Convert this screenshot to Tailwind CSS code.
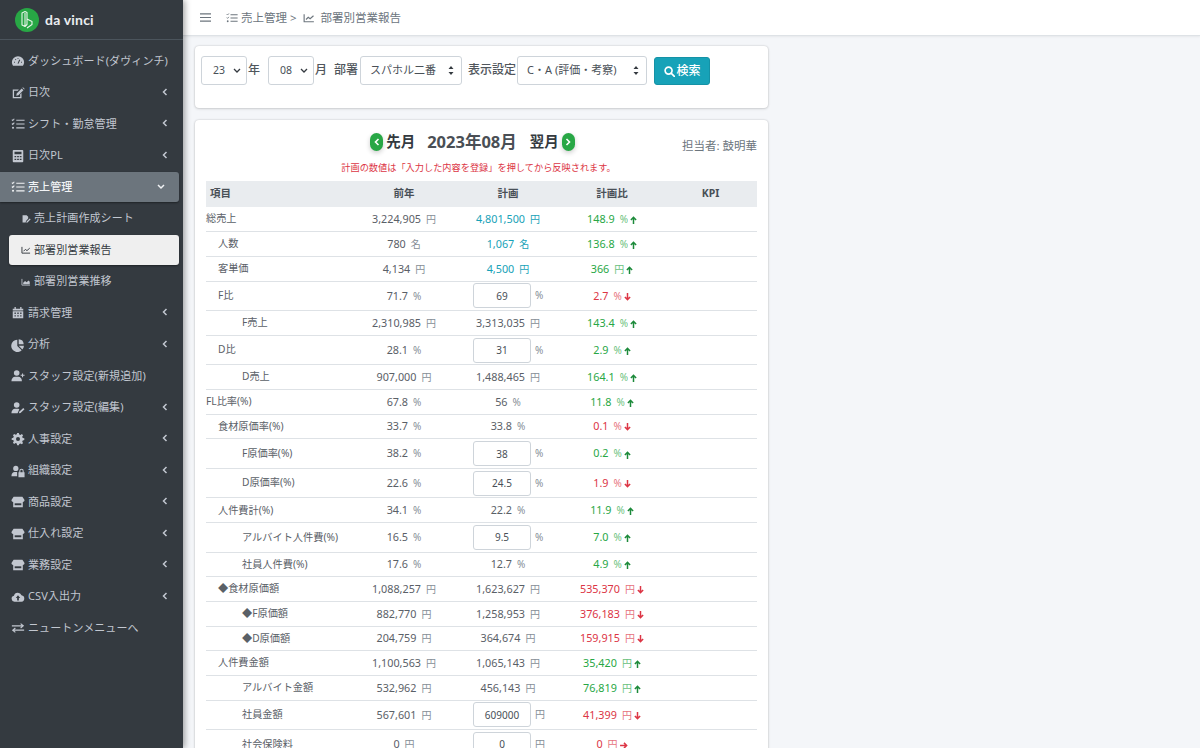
<!DOCTYPE html>
<html lang="ja">
<head>
<meta charset="UTF-8">
<title>部署別営業報告</title>
<script src="https://cdn.jsdelivr.net/npm/@tailwindcss/browser@4"></script>
</head>
<body class="h-[748px] overflow-hidden bg-[#f4f6f9] text-[#5a6067] font-['Noto_Sans','Noto_Sans_CJK_JP',sans-serif]">
<div class="flex h-[748px]">

  <!-- sidebar -->
  <aside class="w-[183px] shrink-0 bg-[#343a40] text-[#c2c7d0] shadow-[2px_0_6px_rgba(0,0,0,.35)] z-10">
    <div class="h-[40px] flex items-center pl-[15px] gap-[6px] border-b border-[#4b545c]">
      <svg class="w-[24px] h-[24px]" viewBox="0 0 24 24">
        <circle cx="12" cy="12" r="12" fill="#28a745"/>
        <path d="M7 5l3-1.500 2 1v12l-2 2-3-1.500zM10 5v13.500M12 11l5 2.500v3L12 20" fill="none" stroke="#e8f5ea" stroke-width="1.100" stroke-linejoin="round"/>
      </svg>
      <span class="text-[14px] font-bold text-[#e9ecef] font-['Lato',sans-serif] tracking-[.2px]">da vinci</span>
    </div>
    <nav id="nav" class="pt-[6px] text-[11px] tracking-[.1px]"></nav>
  </aside>

  <div class="flex-1 min-w-0 h-[748px] overflow-hidden">
    <!-- top bar -->
    <header class="h-[36px] bg-white border-b border-[#dee2e6] shadow-[0_1px_2px_rgba(0,0,0,.06)] flex items-center text-[11.500px] text-[#6c757d]">
      <svg class="w-[11px] h-[11px] ml-[17px]" viewBox="0 0 12 12" fill="none" stroke="#6c757d" stroke-width="1.300"><path d="M0 2h12M0 6h12M0 10h12"/></svg>
      <span id="crumb1" class="ml-[15px] w-[12px] h-[12px] flex"></span>
      <span class="ml-[3px]">売上管理 &gt;</span>
      <span id="crumb2" class="ml-[6px] w-[12px] h-[12px] flex"></span>
      <span class="ml-[6px]">部署別営業報告</span>
    </header>

    <main class="w-[573px] ml-[12px] pt-[10px]">
      <!-- search -->
      <section class="h-[62px] bg-white rounded-[4px] shadow-[0_0_2px_rgba(0,0,0,.2),0_1px_3px_rgba(0,0,0,.12)] pt-[10px] pl-[6px] flex items-start text-[12px] text-[#50565c]">
        <div class="relative w-[46px] h-[29px]">
          <select class="w-full h-full appearance-none pl-[11px] bg-white border border-[#ced4da] rounded-[3px] text-[10.500px] text-[#495057]"><option>23</option></select>
          <svg class="absolute right-[6px] top-[12px] w-[8px] h-[5px]" viewBox="0 0 8 5" fill="none" stroke="#343a40" stroke-width="1.300"><path d="M1 1l3 3 3-3"/></svg>
        </div>
        <span class="ml-[1px] mt-[5px] font-medium">年</span>
        <div class="relative w-[46px] h-[29px] ml-[8px]">
          <select class="w-full h-full appearance-none pl-[11px] bg-white border border-[#ced4da] rounded-[3px] text-[10.500px] text-[#495057]"><option>08</option></select>
          <svg class="absolute right-[6px] top-[12px] w-[8px] h-[5px]" viewBox="0 0 8 5" fill="none" stroke="#343a40" stroke-width="1.300"><path d="M1 1l3 3 3-3"/></svg>
        </div>
        <span class="ml-[1px] mt-[5px] font-medium">月</span>
        <span class="ml-[7px] mt-[5px] font-medium">部署</span>
        <div class="relative w-[102px] h-[29px] ml-[2px]">
          <select class="w-full h-full appearance-none pl-[9px] bg-white border border-[#ced4da] rounded-[3px] text-[11px] text-[#495057]"><option>スパホル二番</option></select>
          <svg class="absolute right-[8px] top-[10px] w-[6px] h-[9px]" viewBox="0 0 6 9" fill="#343a40"><path d="M3 0l2.500 3H.500zM3 9L.500 6h5z"/></svg>
        </div>
        <span class="ml-[6px] mt-[5px] font-medium">表示設定</span>
        <div class="relative w-[130px] h-[29px] ml-[1px]">
          <select class="w-full h-full appearance-none pl-[9px] bg-white border border-[#ced4da] rounded-[3px] text-[11px] text-[#495057]"><option>C・A (評価・考察)</option></select>
          <svg class="absolute right-[8px] top-[10px] w-[6px] h-[9px]" viewBox="0 0 6 9" fill="#343a40"><path d="M3 0l2.500 3H.500zM3 9L.500 6h5z"/></svg>
        </div>
        <button class="ml-[7px] mt-[1px] w-[56px] h-[28px] bg-[#17a2b8] border border-[#1592a6] rounded-[3px] text-white text-[12px] font-medium flex items-center justify-center gap-[2px]">
          <svg class="w-[11px] h-[11px]" viewBox="0 0 12 12" fill="none" stroke="#fff" stroke-width="1.800"><circle cx="5" cy="5" r="3.800"/><path d="M8 8l3.300 3.300" stroke-linecap="round"/></svg>検索
        </button>
      </section>

      <!-- report -->
      <section class="mt-[12px] bg-white rounded-[4px] shadow-[0_0_2px_rgba(0,0,0,.2),0_1px_3px_rgba(0,0,0,.12)] px-[11px] pt-[10px] h-[700px]">
        <div class="relative h-[24px] flex items-center justify-center pr-[18px] text-[#343a40]">
          <span class="w-[13px] h-[18px] rounded-full bg-[#28a745] text-white flex items-center justify-center shadow-[0_2px_5px_rgba(0,0,0,.2)]">
            <svg class="w-[6px] h-[8px]" viewBox="0 0 6 8" fill="none" stroke="#fff" stroke-width="1.600"><path d="M4.500 1L1.500 4l3 3"/></svg>
          </span>
          <span class="ml-[3px] text-[14.500px] font-bold">先月</span>
          <span class="ml-[12px] text-[16.500px] font-bold text-[#4a4f55]">2023年08月</span>
          <span class="ml-[13px] text-[14.500px] font-bold">翌月</span>
          <span class="ml-[3px] w-[13px] h-[18px] rounded-full bg-[#28a745] text-white flex items-center justify-center shadow-[0_2px_5px_rgba(0,0,0,.2)]">
            <svg class="w-[6px] h-[8px]" viewBox="0 0 6 8" fill="none" stroke="#fff" stroke-width="1.600"><path d="M1.500 1l3 3-3 3"/></svg>
          </span>
          <span class="absolute right-0 top-[7px] text-[11.500px] text-[#6c757d]">担当者: 鼓明華</span>
        </div>
        <p class="mt-[7px] pr-[6px] text-center text-[9.200px] leading-[14px] text-[#dc3545]">計画の数値は「入力した内容を登録」を押してから反映されます。</p>
        <table class="mt-[6px] w-[551px] table-fixed border-collapse">
          <colgroup><col class="w-[146px]"><col class="w-[104px]"><col class="w-[104px]"><col class="w-[104px]"><col class="w-[93px]"></colgroup>
          <thead>
            <tr class="h-[26px] bg-[#e9ecef] text-[10.500px] font-bold text-[#495057]">
              <th class="text-left pl-[4px] font-bold">項目</th><th class="font-bold">前年</th><th class="font-bold">計画</th><th class="font-bold">計画比</th><th class="font-bold">KPI</th>
            </tr>
          </thead>
          <tbody id="rows"></tbody>
        </table>
      </section>
    </main>
  </div>
</div>

<script>
  const dark = '#343a40'
  const icons = {
    gauge: `<path d="M8 2.500a7 7 0 0 0-7 7c0 1.500.5 2.800 1.300 4h11.400c.8-1.200 1.300-2.500 1.300-4a7 7 0 0 0-7-7z"/><path d="M8 11l2-4.500M3.500 9.500h1M11.500 9.500h1M5 6l.7.7M8 4.500v1" stroke="${dark}" stroke-width="1.200" fill="none"/>`,
    edit: `<path d="M2 4h7L7.800 5.500H3.500v7h7V9.300L12 8v6H2z"/><path d="M6.500 8.500l5.700-5.700 2 2-5.700 5.700-2.500.5zM13 2l.7-.7 2 2-.7.7z"/>`,
    tasks: `<path d="M6 3h9.500v1.400H6zM6 7.300h9.500v1.400H6zM6 11.600h9.500V13H6z"/><path d="M1 3l1 1 1.800-2M1 7.500l1 1 1.800-2" fill="none" stroke="currentColor" stroke-width="1.200"/><circle cx="2.300" cy="12.300" r="1.200"/>`,
    calc: `<path fill-rule="evenodd" d="M3 1h10a1 1 0 0 1 1 1v12a1 1 0 0 1-1 1H3a1 1 0 0 1-1-1V2a1 1 0 0 1 1-1zm1 2v3h8V3zm0 5v1.500h2V8zm3 0v1.500h2V8zm3 0v1.500h2V8zm-6 3v1.500h2V11zm3 0v1.500h2V11zm3 0v1.500h2V11z"/>`,
    line: `<path d="M1.500 3v10h13M4 10l3-3 2.500 2L14 5" fill="none" stroke="currentColor" stroke-width="1.500"/>`,
    sign: `<path d="M2.500 2h6.500l2.500 2.500V7L8 11l-.5 2.500h-5z"/><path d="M9 12l5-5 1.500 1.500-5 5-2 .5z"/>`,
    area: `<path d="M1.500 3v10h13" fill="none" stroke="currentColor" stroke-width="1.300"/><path d="M3.500 11.500V9l3-2.500 2.500 2 3-3 2 2v4z"/>`,
    cal: `<path fill-rule="evenodd" d="M4 1h1.500v2h5V1H12v2h2v2H2V3h2zM2 6h12v8H2zm2 1.500V9h1.500V7.500zm3.200 0V9h1.600V7.500zm3.300 0V9H12V7.500zM4 10.500V12h1.500v-1.500zm3.200 0V12h1.600v-1.500zm3.300 0V12H12v-1.500z"/>`,
    pie: `<path d="M7.200 2v7l5 5A7 7 0 1 1 7.200 2z"/><path d="M8.800 1.500a6 6 0 0 1 5.700 5.700H8.800zM8.800 8.800h6a6 6 0 0 1-1.800 4.200z"/>`,
    userPlus: `<circle cx="6.500" cy="4.500" r="3.200"/><path d="M.5 14c0-3.500 2-5.200 4-5.200h4c2 0 4 1.700 4 5.200z"/><path d="M13.200 5v4.500M11 7.200h4.500" stroke="currentColor" stroke-width="1.200"/>`,
    userEdit: `<circle cx="6.500" cy="4.500" r="3.200"/><path d="M.5 14c0-3.500 2-5.200 4-5.200h4l1 .6L7.500 14z"/><path d="M9 14l.4-1.800 4.600-4.200 1.400 1.400-4.500 4.300z"/>`,
    cog: `<path d="M7 1h2l.4 1.800 1.400.6 1.600-1 1.400 1.400-1 1.600.6 1.400 1.800.4v2l-1.800.4-.6 1.400 1 1.600-1.400 1.400-1.600-1-1.400.6L9 15H7l-.4-1.800-1.400-.6-1.600 1-1.400-1.400 1-1.600-.6-1.400L.8 9V7l1.800-.4.6-1.400-1-1.600 1.400-1.400 1.600 1 1.400-.6z"/><circle cx="8" cy="8" r="2.300" fill="${dark}"/>`,
    userLock: `<circle cx="5.500" cy="5" r="3"/><path d="M.5 14c0-3.300 1.800-4.800 3.500-4.800h3V14z"/><path fill-rule="evenodd" d="M8.500 9.500h1V8a2.500 2.500 0 0 1 5 0v1.500h1V15h-7zm2.200 0h2.600V8a1.300 1.300 0 0 0-2.600 0z"/>`,
    store: `<path d="M3 2h10l2.500 3.800c0 1.400-1 2.200-2 2.200v6h-11V8c-1 0-2-.8-2-2.200z"/><path d="M4.200 9.500h7.600v2.200H4.200z" fill="${dark}"/>`,
    cloud: `<path d="M4 13.500a3.500 3.500 0 0 1-.6-6.900 4.500 4.500 0 0 1 8.600-.6 3.800 3.800 0 0 1 0 7.500z"/><path d="M8 6L5.500 9H7v3h2V9h1.500z" fill="${dark}"/>`,
    swap: `<path d="M1 5.500h13M11 3l3 2.500L11 8M15 10.500H2M5 8l-3 2.500L5 13" fill="none" stroke="currentColor" stroke-width="1.300"/>`
  }
  const svg = (name, cls) => `<svg class="${cls}" viewBox="0 0 16 16" fill="currentColor">${icons[name]}</svg>`

  const menu = [
    ['gauge', 'ダッシュボード(ダヴィンチ)'], ['edit', '日次', 1], ['tasks', 'シフト・勤怠管理', 1], ['calc', '日次PL', 1],
    ['tasks', '売上管理', 2], ['sign', '売上計画作成シート', 0, 'sub'], ['line', '部署別営業報告', 0, 'on'], ['area', '部署別営業推移', 0, 'sub'],
    ['cal', '請求管理', 1], ['pie', '分析', 1], ['userPlus', 'スタッフ設定(新規追加)'], ['userEdit', 'スタッフ設定(編集)', 1],
    ['cog', '人事設定', 1], ['userLock', '組織設定', 1], ['store', '商品設定', 1], ['store', '仕入れ設定', 1], ['store', '業務設定', 1],
    ['cloud', 'CSV入出力', 1], ['swap', 'ニュートンメニューへ']
  ]
  document.getElementById('nav').innerHTML = menu.map(([icon, label, arrow, kind]) => {
    const chev = arrow === 1
      ? '<svg class="absolute right-[15px] top-[10px] w-[6px] h-[8px]" viewBox="0 0 6 8" fill="none" stroke="currentColor" stroke-width="1.500"><path d="M4.500 1L1.500 4l3 3"/></svg>'
      : arrow === 2
      ? '<svg class="absolute right-[14px] top-[12px] w-[8px] h-[6px]" viewBox="0 0 8 6" fill="none" stroke="currentColor" stroke-width="1.500"><path d="M1 1l3 3 3-3"/></svg>'
      : ''
    if (kind === 'on') return `<a class="relative ml-[9px] mr-[4px] h-[30px] mb-[1.500px] flex items-center pl-[12px] gap-[3px] rounded-[3px] bg-[#efefef] text-[#343a40] shadow-[0_1px_2px_rgba(0,0,0,.4)]">${svg(icon, 'w-[10px] h-[10px] shrink-0')}${label}</a>`
    if (kind === 'sub') return `<a class="relative h-[30px] mb-[1.500px] flex items-center pl-[21px] gap-[3px]">${svg(icon, 'w-[10px] h-[10px] shrink-0')}${label}</a>`
    if (arrow === 2) return `<a class="relative mr-[4px] h-[30px] mb-[1.500px] flex items-center pl-[11px] gap-[3px] rounded-r-[3px] bg-[#6c757d] text-[#f1f3f5] font-medium shadow-[0_1px_2px_rgba(0,0,0,.4)]">${svg(icon, 'w-[14px] h-[14px] shrink-0')}${label}${chev}</a>`
    return `<a class="relative h-[30px] mb-[1.500px] flex items-center pl-[11px] gap-[3px]">${svg(icon, 'w-[14px] h-[14px] shrink-0')}${label}${chev}</a>`
  }).join('')

  document.getElementById('crumb1').innerHTML = svg('tasks', 'w-[12px] h-[12px]')
  document.getElementById('crumb2').innerHTML = svg('line', 'w-[12px] h-[12px]')

  // label, indent, last year, unit, plan, plan type (b = blue, i = input), ratio, direction
  const data = [
    ['総売上', 0, '3,224,905', '円', '4,801,500', 'b', '148.9', '%', 'u'],
    ['人数', 1, '780', '名', '1,067', 'b', '136.8', '%', 'u', '名'],
    ['客単価', 1, '4,134', '円', '4,500', 'b', '366', '円', 'u'],
    ['F比', 1, '71.7', '%', '69', 'i', '2.7', '%', 'd'],
    ['F売上', 2, '2,310,985', '円', '3,313,035', '', '143.4', '%', 'u'],
    ['D比', 1, '28.1', '%', '31', 'i', '2.9', '%', 'u'],
    ['D売上', 2, '907,000', '円', '1,488,465', '', '164.1', '%', 'u'],
    ['FL比率(%)', 0, '67.8', '%', '56', '', '11.8', '%', 'u'],
    ['食材原価率(%)', 1, '33.7', '%', '33.8', '', '0.1', '%', 'd'],
    ['F原価率(%)', 2, '38.2', '%', '38', 'i', '0.2', '%', 'u'],
    ['D原価率(%)', 2, '22.6', '%', '24.5', 'i', '1.9', '%', 'd'],
    ['人件費計(%)', 1, '34.1', '%', '22.2', '', '11.9', '%', 'u'],
    ['アルバイト人件費(%)', 2, '16.5', '%', '9.5', 'i', '7.0', '%', 'u'],
    ['社員人件費(%)', 2, '17.6', '%', '12.7', '', '4.9', '%', 'u'],
    ['◆食材原価額', 1, '1,088,257', '円', '1,623,627', '', '535,370', '円', 'd'],
    ['◆F原価額', 2, '882,770', '円', '1,258,953', '', '376,183', '円', 'd'],
    ['◆D原価額', 2, '204,759', '円', '364,674', '', '159,915', '円', 'd'],
    ['人件費金額', 1, '1,100,563', '円', '1,065,143', '', '35,420', '円', 'u'],
    ['アルバイト金額', 2, '532,962', '円', '456,143', '', '76,819', '円', 'u'],
    ['社員金額', 2, '567,601', '円', '609000', 'i', '41,399', '円', 'd'],
    ['社会保険料', 2, '0', '円', '0', 'i', '0', '円', 'r']
  ]
  const arrows = {
    u: '<svg class="inline w-[7px] h-[8px] ml-[2px] text-[#1c8a3a]" viewBox="0 0 8 9" fill="none" stroke="currentColor" stroke-width="1.700"><path d="M4 9V1.500M1 4.500l3-3 3 3"/></svg>',
    d: '<svg class="inline w-[7px] h-[8px] ml-[2px] text-[#dc3545]" viewBox="0 0 8 9" fill="none" stroke="currentColor" stroke-width="1.700"><path d="M4 0v7.500M1 4.500l3 3 3-3"/></svg>',
    r: '<svg class="inline w-[8px] h-[7px] ml-[2px] text-[#dc3545]" viewBox="0 0 9 8" fill="none" stroke="currentColor" stroke-width="1.700"><path d="M0 4h7.500M4.500 1l3 3-3 3"/></svg>'
  }
  const indent = ['pl-0', 'pl-[12px]', 'pl-[36px]']
  document.getElementById('rows').innerHTML = data.map(r => {
    const [label, lv, prev, unit, plan, type, ratio, rUnit, dir, pUnit] = r
    const planUnit = pUnit || unit
    const planCell = type === 'i'
      ? `<div class="flex items-center pl-[17px]"><input value="${plan}" class="w-[58px] h-[25px] border border-[#ced4da] rounded-[3px] text-center text-[10px] text-[#495057]"><span class="ml-[4px] text-[10px] text-[#868e96]">${planUnit}</span></div>`
      : `<span class="${type === 'b' ? 'text-[#17a2b8]' : ''}">${plan}</span><span class="ml-[5px] text-[10px] ${type === 'b' ? 'text-[#17a2b8]' : 'text-[#868e96]'}">${planUnit}</span>`
    const good = dir === 'u'
    return `<tr class="${type === 'i' ? 'h-[29.500px]' : 'h-[24.700px]'} border-b border-[#dee2e6] text-[10.800px] text-center">
      <td class="text-left text-[10.200px] ${indent[lv]}">${label}</td>
      <td>${prev}<span class="ml-[5px] text-[10px] text-[#868e96]">${unit}</span></td>
      <td>${planCell}</td>
      <td class="${good ? 'text-[#28a745]' : 'text-[#dc3545]'}">${ratio}<span class="ml-[5px] text-[10px] opacity-70">${rUnit}</span>${arrows[dir]}</td>
      <td></td>
    </tr>`
  }).join('')
</script>
</body>
</html>
